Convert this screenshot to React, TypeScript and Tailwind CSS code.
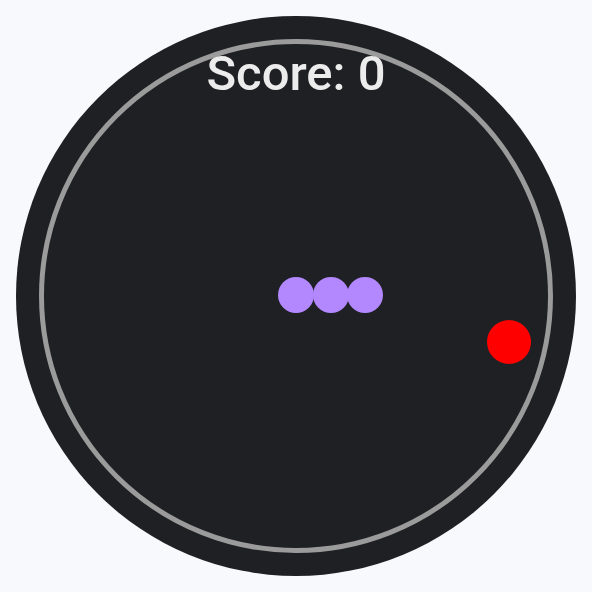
export default function App() {
  const snake = [
    { x: 296, y: 295 },
    { x: 331, y: 295 },
    { x: 365, y: 295 },
  ];
  const food = { x: 509, y: 342 };

  return (
    <div className="flex h-[592px] w-[592px] items-center justify-center bg-[#f8f9fc]">
      {/* game board */}
      <div className="relative h-[560px] w-[560px] rounded-full bg-[#1f2024]">
        <div className="absolute left-[23px] top-[23px] h-[514px] w-[514px] rounded-full border-[5px] border-[#9b9b9b]" />

        <div className="absolute left-0 right-0 top-[33px] text-center font-['Roboto',sans-serif] text-[49px] font-medium leading-[50px] text-[#ececec]">
          Score: 0
        </div>

        {snake.map((s, i) => (
          <div
            key={i}
            className="absolute h-[36px] w-[36px] rounded-full bg-[#b388ff]"
            style={{ left: s.x - 16 - 18, top: s.y - 16 - 18 }}
          />
        ))}

        <div
          className="absolute h-[44px] w-[44px] rounded-full bg-[#ff0000]"
          style={{ left: food.x - 16 - 22, top: food.y - 16 - 22 }}
        />
      </div>
    </div>
  );
}
